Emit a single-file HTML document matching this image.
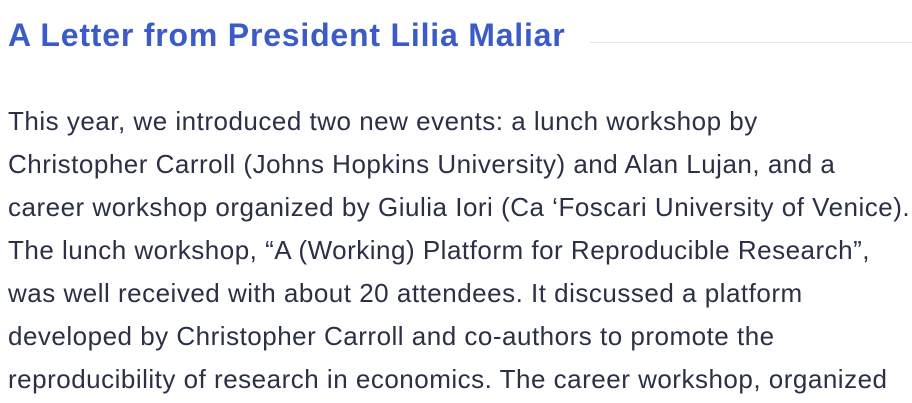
<!DOCTYPE html>
<html><head><meta charset="utf-8"><style>
html,body{margin:0;padding:0;background:#fff;width:912px;height:403px;overflow:hidden}
h1{position:absolute;left:8px;top:15px;margin:0;font:bold 32px/40px "Liberation Sans",sans-serif;color:#3a5bc8;letter-spacing:0.8px;white-space:nowrap}
.rule{position:absolute;left:590px;top:42px;width:322px;height:1px;background:#e2e4e8}
.body{position:absolute;left:8px;top:100px;font:26px/43px "Liberation Sans",sans-serif;color:#2b3046;letter-spacing:0.5px}
.body div{white-space:nowrap}
</style></head><body>
<h1>A Letter from President Lilia Maliar</h1>
<div class="rule"></div>
<div class="body">
<div>This year, we introduced two new events: a lunch workshop by</div>
<div>Christopher Carroll (Johns Hopkins University) and Alan Lujan, and a</div>
<div>career workshop organized by Giulia Iori (Ca ‘Foscari University of Venice).</div>
<div>The lunch workshop, “A (Working) Platform for Reproducible Research”,</div>
<div>was well received with about 20 attendees. It discussed a platform</div>
<div>developed by Christopher Carroll and co-authors to promote the</div>
<div>reproducibility of research in economics. The career workshop, organized</div>
</div>
</body></html>
